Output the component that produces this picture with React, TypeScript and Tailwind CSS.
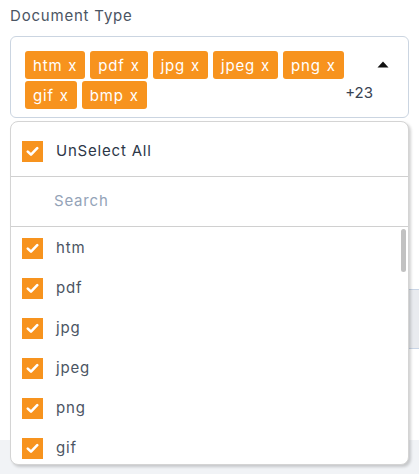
import React from 'react'

const tags = ['htm', 'pdf', 'jpg', 'jpeg', 'png', 'gif', 'bmp']
const items = ['htm', 'pdf', 'jpg', 'jpeg', 'png', 'gif']

function Check() {
  return (
    <span className="w-[21px] h-[21px] bg-[#f7931e] flex items-center justify-center shrink-0">
      <svg width="13" height="11" viewBox="0 0 13 11" fill="none">
        <path d="M1.8 5.6 L5 8.6 L11.2 2.2" stroke="white" strokeWidth="2.6" strokeLinecap="round" strokeLinejoin="round" />
      </svg>
    </span>
  )
}

export default function App() {
  return (
    <div className="relative h-[474px] w-[419px] overflow-hidden bg-white text-[15px] tracking-[0.8px] font-['Inter',sans-serif] text-[#374151]">
      <div className="px-[10px] pt-[6px]">
        <div className="leading-[20px] text-[#4b5563]">Document Type</div>
        <div className="mt-[10px] w-[399px] border border-[#cbd5e1] rounded-[6px] flex pl-[14px] pr-[18px] pt-[14px] pb-[8px]">
          <div className="flex-1 flex flex-wrap gap-x-[5px] gap-y-[2px]">
            {tags.map(t => (
              <span key={t} className="h-[28px] px-[8px] rounded-[3px] bg-[#f7931e] text-white flex items-center gap-[6px] leading-none">
                <span>{t}</span>
                <span>x</span>
              </span>
            ))}
          </div>
          <div className="w-[40px] flex flex-col items-end">
            <svg className="mt-[10px] mr-[1px]" width="12" height="7" viewBox="0 0 12 7">
              <path d="M6 0.5 L11.5 6.5 L0.5 6.5 Z" fill="#111" />
            </svg>
            <span className="mt-[16px] mr-[17px] leading-[18px] tracking-normal text-[#374151]">+23</span>
          </div>
        </div>
      </div>

      <div className="mt-[171px] ml-[10px] w-[430px] h-[60px] bg-[#e9ebef] border-y border-[#c9d5e6]" />

      <div className="mt-[91px] h-[40px] bg-[#f1f3f6]" />

      <div className="absolute left-[10px] top-[121px] w-[399px] h-[344px] bg-white border border-[#d4d4d4] rounded-[8px] shadow-[2px_2px_3px_rgba(0,0,0,0.18)] flex flex-col overflow-hidden">
        <div className="h-[55px] flex items-center gap-[13px] pl-[11px] pt-[5px] border-b border-[#d0d0d0] shrink-0">
          <Check />
          <span className="text-[#2d3748]">UnSelect All</span>
        </div>
        <div className="h-[50px] flex items-center pl-[43px] border-b border-[#d0d0d0] shrink-0 text-[#94a3b8]">
          Search
        </div>
        <div className="relative flex-1 overflow-hidden pt-[1px]">
          {items.map(i => (
            <div key={i} className="h-[40px] flex items-center gap-[13px] pl-[11px]">
              <Check />
              <span className="text-[#4b5563]">{i}</span>
            </div>
          ))}
          <div className="absolute right-[2px] top-[2px] w-[5px] h-[43px] rounded-full bg-[#c1c1c1]" />
        </div>
      </div>
    </div>
  )
}
